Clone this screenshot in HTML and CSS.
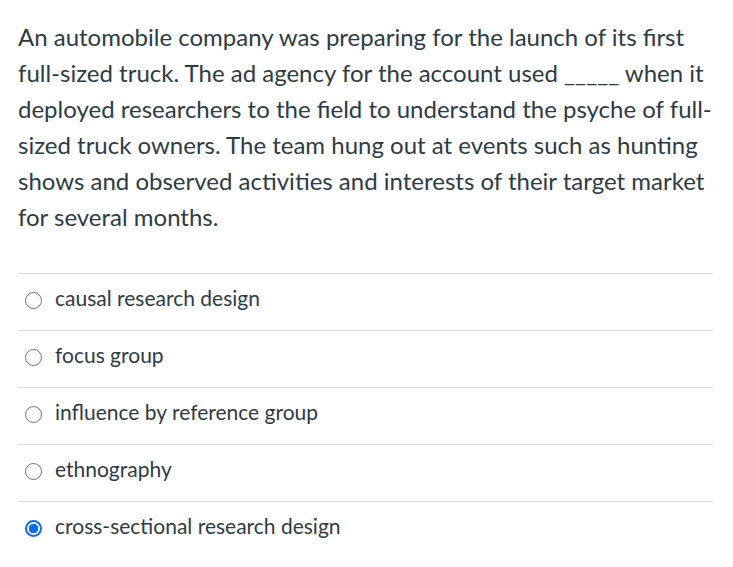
FILE: index.html
```html
<!DOCTYPE html>
<html lang="en">
<head>
<meta charset="utf-8">
<link rel="stylesheet" href="styles.css">
<title>Question</title>
</head>
<body>
<div class="question">
  <p class="question-text">An automobile company was preparing for the launch of its first full-sized truck. The ad agency for the account used _____ when it deployed researchers to the field to understand the psyche of full-sized truck owners. The team hung out at events such as hunting shows and observed activities and interests of their target market for several months.</p>
  <ul class="answers">
    <li class="answer"><span class="radio"></span><span class="label">causal research design</span></li>
    <li class="answer"><span class="radio"></span><span class="label">focus group</span></li>
    <li class="answer"><span class="radio"></span><span class="label">influence by reference group</span></li>
    <li class="answer"><span class="radio"></span><span class="label">ethnography</span></li>
    <li class="answer"><span class="radio checked"></span><span class="label">cross-sectional research design</span></li>
  </ul>
</div>
</body>
</html>
```

FILE: styles.css
```css
html, body {
  margin: 0;
  padding: 0;
  background: #ffffff;
}
body {
  font-family: Lato, "Liberation Sans", sans-serif;
  color: #2d3b45;
}
.question {
  padding: 19px 20px 0 18px;
}
.question-text {
  margin: 0;
  font-size: 24px;
  line-height: 36px;
}
.answers {
  list-style: none;
  margin: 38px 0 0 0;
  padding: 0;
}
.answer {
  display: flex;
  align-items: center;
  height: 56px;
  border-top: 1px solid #dcdcdc;
  font-size: 21px;
}
.radio {
  box-sizing: border-box;
  width: 17px;
  height: 17px;
  border: 1.5px solid #707070;
  border-radius: 50%;
  margin-left: 7px;
  margin-right: 13px;
  margin-top: -4px;
  flex: none;
}
.radio.checked {
  border: 2px solid #0a6cf5;
  background: radial-gradient(circle, #0a6cf5 0 4.5px, #ffffff 5px);
}
.label {
  margin-top: -10px;
}
```
